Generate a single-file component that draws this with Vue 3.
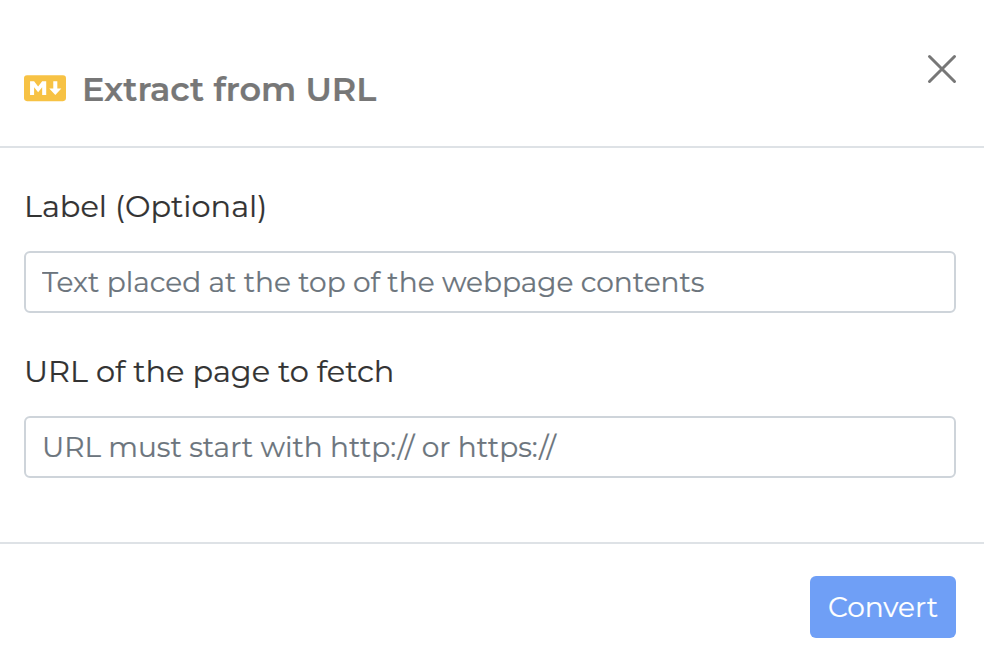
<script setup>
import { ref } from 'vue'

const label = ref('')
const url = ref('')
</script>

<template>
  <form class="dialog" @submit.prevent>
    <header class="header">
      <div class="heading">
        <svg class="badge" viewBox="0 -1.500 208 133.700" aria-hidden="true">
          <rect width="208" height="128" rx="15" fill="#f7c244" />
          <path d="M30 98V30h20l20 25 20-25h20v68H90V59L70 84 50 59v39zm125 0l-30-33h20V30h20v35h20z" fill="#fff" />
        </svg>
        <h1>Extract from URL</h1>
      </div>
      <button class="close" type="button" aria-label="Close">
        <svg viewBox="0 0 30 30"><path d="M2.500 2.500L27.500 27.500M27.500 2.500L2.500 27.500" /></svg>
      </button>
    </header>
    <main class="body">
      <div class="field">
        <label for="label">Label (Optional)</label>
        <input id="label" v-model="label" placeholder="Text placed at the top of the webpage contents">
      </div>
      <div class="field">
        <label for="url">URL of the page to fetch</label>
        <input id="url" v-model="url" placeholder="URL must start with http:// or https://">
      </div>
    </main>
    <footer class="footer"><button class="convert" type="submit">Convert</button></footer>
  </form>
</template>

<style>
body { margin: 0; background: #fff; }
</style>

<style scoped>
* { box-sizing: border-box; }
.dialog { width: 984px; height: 666px; display: flex; flex-direction: column; font-family: Montserrat, Inter, sans-serif; color: #333; background: #fff; -webkit-text-stroke-width: .2px; }
.header { height: 148px; flex: none; display: flex; justify-content: space-between; padding: 54px 27px 0 24px; border-bottom: 2px solid #dee2e6; }
.heading { display: flex; gap: 16px; }
.badge { width: 42px; height: 27px; margin-top: 21px; }
h1 { margin: 13px 0 0; height: 44px; line-height: 44px; font-size: 33.450px; font-weight: 600; color: #777; white-space: nowrap; }
.close { width: 30px; height: 30px; padding: 0; border: 0; background: none; }
.close svg { display: block; width: 30px; height: 30px; fill: none; stroke: #777; stroke-width: 3; stroke-linecap: round; }
.body { height: 396px; flex: none; padding: 37px 28px 0 24px; border-bottom: 2px solid #dee2e6; }
.field { height: 165px; }
label { display: block; height: 66px; line-height: 44px; font-size: 30.400px; }
input { display: block; width: 932px; height: 62px; border: 2px solid #ced4da; border-radius: 6px; padding: 0 16px; font: 28px Montserrat, Inter, sans-serif; outline: none; background: #fff; -webkit-text-stroke-width: .2px; }
input::placeholder { color: #6c757d; opacity: 1; }
.footer { display: flex; justify-content: flex-end; padding: 32px 28px 0; }
.convert { width: 146px; height: 62px; padding: 0; border: 0; border-radius: 6px; background: #6f9ff6; color: #fff; font: 28px Montserrat, Inter, sans-serif; -webkit-text-stroke-width: .2px; }
</style>
